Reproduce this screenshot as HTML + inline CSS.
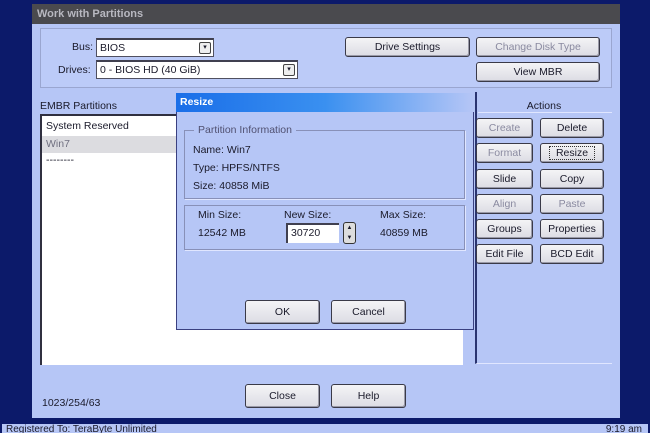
<!DOCTYPE html>
<html><head><style>
*{margin:0;padding:0;box-sizing:border-box}
body{width:650px;height:433px;background:#0c1a6a;position:relative;overflow:hidden;font-family:"Liberation Sans",sans-serif;font-size:10.5px;color:#1a1a2a}
.a{position:absolute}
.btn{position:absolute;background:linear-gradient(#f4f4f6,#dcdce4);border:1px solid #3a3a48;border-radius:3px;text-align:center;font-size:10.5px;box-shadow:inset -1px -1px 0 #9a9aa8}
.dis{color:#8a8aa0}
.combo{position:absolute;background:#fff;border:1px solid #505060;border-top:2px solid #404050;padding-left:3px;line-height:16px}
.dd{position:absolute;right:2px;top:2px;width:12px;height:12px;border:1px solid #444;border-radius:2px;background:#eee;font-size:7px;line-height:10px;text-align:center}
.grp{position:absolute;border:1px solid #8890b8;box-shadow:1px 1px 0 #e0e6ff}
</style></head><body>
<div class="a" style="left:32px;top:4px;width:588px;height:414px;background:#b6c6f6"></div>
<div class="a" style="left:32px;top:4px;width:588px;height:20px;background:#4a4a4e;color:#b8b8c0;font-weight:bold;font-size:11px;padding:4px 5px">Work with Partitions</div>
<div class="a" style="left:40px;top:28px;width:572px;height:60px;background:#bccbf8;border:1px solid #9aa6d0"></div>
<div class="a" style="left:72px;top:41px">Bus:</div>
<div class="combo" style="left:96px;top:38px;width:118px;height:19px">BIOS<div class="dd">▾</div></div>
<div class="a" style="left:58px;top:64px">Drives:</div>
<div class="combo" style="left:96px;top:60px;width:202px;height:19px">0 - BIOS HD (40 GiB)<div class="dd">▾</div></div>
<div class="btn" style="left:345px;top:37px;width:125px;height:20px;line-height:18px">Drive Settings</div>
<div class="btn dis" style="left:476px;top:37px;width:124px;height:20px;line-height:18px">Change Disk Type</div>
<div class="btn" style="left:476px;top:62px;width:124px;height:20px;line-height:18px">View MBR</div>
<div class="a" style="left:40px;top:100px">EMBR Partitions</div>
<div class="a" style="left:40px;top:114px;width:423px;height:251px;background:#fff;border-left:2px solid #303040;border-top:2px solid #303040"></div>
<div class="a" style="left:46px;top:120px">System Reserved</div>
<div class="a" style="left:42px;top:136px;width:140px;height:17px;background:#dcdce0;color:#707080;padding:2px 4px">Win7</div>
<div class="a" style="left:46px;top:154px">--------</div>
<div class="a" style="left:475px;top:92px;width:137px;height:272px;border-left:2px solid #2a3470;border-bottom:1px solid #e0e6ff"></div>
<div class="a" style="left:476px;top:100px;width:136px;text-align:center">Actions</div>
<div class="a" style="left:478px;top:112px;width:134px;height:1px;background:#e0e6ff"></div>
<div class="btn dis" style="left:476px;top:118px;width:57px;height:20px;line-height:18px">Create</div>
<div class="btn" style="left:540px;top:118px;width:64px;height:20px;line-height:18px">Delete</div>
<div class="btn dis" style="left:476px;top:143px;width:57px;height:20px;line-height:18px">Format</div>
<div class="btn" style="left:540px;top:143px;width:64px;height:20px;line-height:18px"><span style="border:1px dotted #333;padding:0 6px">Resize</span></div>
<div class="btn" style="left:476px;top:169px;width:57px;height:20px;line-height:18px">Slide</div>
<div class="btn" style="left:540px;top:169px;width:64px;height:20px;line-height:18px">Copy</div>
<div class="btn dis" style="left:476px;top:194px;width:57px;height:20px;line-height:18px">Align</div>
<div class="btn dis" style="left:540px;top:194px;width:64px;height:20px;line-height:18px">Paste</div>
<div class="btn" style="left:476px;top:219px;width:57px;height:20px;line-height:18px">Groups</div>
<div class="btn" style="left:540px;top:219px;width:64px;height:20px;line-height:18px">Properties</div>
<div class="btn" style="left:476px;top:244px;width:57px;height:20px;line-height:18px">Edit File</div>
<div class="btn" style="left:540px;top:244px;width:64px;height:20px;line-height:18px">BCD Edit</div>
<div class="a" style="left:176px;top:93px;width:298px;height:237px;background:#b6c6f6;border:1px solid #3a4080;border-top:none"></div>
<div class="a" style="left:176px;top:93px;width:298px;height:19px;background:linear-gradient(90deg,#1a6ee8 0%,#3a90f0 50%,#b6c6f6 100%);color:#fff;font-weight:bold;padding:3px 4px">Resize</div>
<div class="grp" style="left:184px;top:130px;width:281px;height:69px"></div>
<div class="a" style="left:194px;top:124px;background:#b6c6f6;padding:0 4px;color:#505070">Partition Information</div>
<div class="a" style="left:193px;top:144px">Name: Win7</div>
<div class="a" style="left:193px;top:162px">Type: HPFS/NTFS</div>
<div class="a" style="left:193px;top:180px">Size: 40858 MiB</div>
<div class="grp" style="left:184px;top:205px;width:281px;height:45px"></div>
<div class="a" style="left:198px;top:209px">Min Size:</div>
<div class="a" style="left:198px;top:227px">12542 MB</div>
<div class="a" style="left:284px;top:209px">New Size:</div>
<div class="a" style="left:286px;top:223px;width:53px;height:20px;background:#fff;border-left:2px solid #404050;border-top:2px solid #404050;padding:2px 3px">30720</div>
<div class="a" style="left:343px;top:222px;width:13px;height:22px;border:1px solid #333;border-radius:3px;background:#ddd;font-size:6px;line-height:10px;text-align:center">▲<br>▼</div>
<div class="a" style="left:380px;top:209px">Max Size:</div>
<div class="a" style="left:380px;top:227px">40859 MB</div>
<div class="btn" style="left:245px;top:300px;width:75px;height:24px;line-height:22px">OK</div>
<div class="btn" style="left:331px;top:300px;width:75px;height:24px;line-height:22px">Cancel</div>
<div class="btn" style="left:245px;top:384px;width:75px;height:24px;line-height:22px">Close</div>
<div class="btn" style="left:331px;top:384px;width:75px;height:24px;line-height:22px">Help</div>
<div class="a" style="left:42px;top:397px">1023/254/63</div>
<div class="a" style="left:2px;top:424px;width:646px;height:9px;background:#b6c6f6;overflow:hidden"><div style="position:absolute;left:4px;top:0;font-size:10px">Registered To: TeraByte Unlimited</div><div style="position:absolute;right:6px;top:0;font-size:10px">9:19 am</div></div>
</body></html>
